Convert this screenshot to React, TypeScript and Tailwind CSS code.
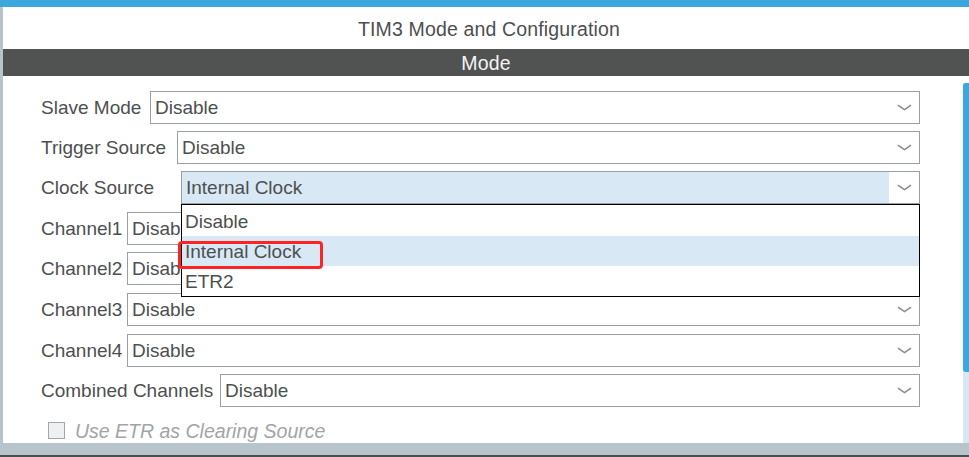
import { ReactNode } from "react";

const rows = [
  { label: "Slave Mode", w: "w-[109px]", h: "h-[40px]", value: "Disable" },
  { label: "Trigger Source", w: "w-[136px]", h: "h-[40px]", value: "Disable" },
  { label: "Clock Source", w: "w-[140px]", h: "h-[41px]", value: "Internal Clock", open: true },
  { label: "Channel1", w: "w-[86px]", h: "h-[40px]", value: "Disable" },
  { label: "Channel2", w: "w-[86px]", h: "h-[41px]", value: "Disable" },
  { label: "Channel3", w: "w-[86px]", h: "h-[41px]", value: "Disable" },
  { label: "Channel4", w: "w-[86px]", h: "h-[40px]", value: "Disable" },
  { label: "Combined Channels", w: "w-[179px]", h: "h-[40px]", value: "Disable" },
];

const options = ["Disable", "Internal Clock", "ETR2"];

function Chevron() {
  return (
    <svg width="15" height="7" viewBox="0 0 15 7" fill="none">
      <path d="M1 1.2 L7.5 5.6 L14 1.2" stroke="#8a8d8f" strokeWidth="1.6" />
    </svg>
  );
}

function Select({ value, open }: { value: string; open?: boolean }) {
  return (
    <div className="relative flex-1 h-[33px] border border-[#9a9fa3] bg-white flex">
      <div
        className={`flex-1 flex items-center pl-[4px] pt-[2px] ${open ? "bg-[#d9e8f5]" : ""}`}
      >
        {value}
      </div>
      <div className="w-[30px] flex items-center justify-center">
        <Chevron />
      </div>
      {open && <Menu />}
    </div>
  );
}

function Menu() {
  return (
    <div className="absolute left-[-1px] right-[-1px] top-[32px] z-10 border border-black bg-white">
      {options.map((o, i) => (
        <div
          key={o}
          className={`flex items-center pl-[3px] pt-[3px] ${i === 0 ? "h-[31px]" : "h-[30px]"} ${
            i === 1 ? "bg-[#d9e8f5]" : ""
          }`}
        >
          {o}
        </div>
      ))}
      {/* red highlight around selected item */}
      <div className="absolute left-[-4px] top-[36px] w-[145px] h-[28px] border-[3px] border-[#ff2424] rounded-[4px]" />
    </div>
  );
}

function Row({ label, w, h, children }: { label: string; w: string; h: string; children: ReactNode }) {
  return (
    <div className={`flex items-start ${h}`}>
      <div className={`${w} h-[33px] pt-[2px] flex items-center shrink-0`}>{label}</div>
      {children}
    </div>
  );
}

export default function App() {
  return (
    <div className="w-[969px] h-[457px] flex flex-col bg-white overflow-hidden font-['Liberation_Sans',Arial,sans-serif] text-[19px] text-[#4d4f50]">
      <div className="h-[7px] bg-[#3aa8dc]" />

      <div className="flex-1 flex min-h-0">
        <div className="w-[3px] bg-[#b8c4cc]" />

        <div className="flex-1 flex flex-col">
          <div className="h-[42px] pt-[3px] pl-[6px] flex items-center justify-center text-[19.5px] tracking-[0.15px]">
            TIM3 Mode and Configuration
          </div>
          <div className="h-[27px] pt-[2px] bg-[#515352] text-[#f4f4f4] flex items-center justify-center text-[19.5px] tracking-[0.15px]">
            Mode
          </div>

          <div className="flex-1 flex min-h-0">
            <div className="flex-1 pt-[15px] pl-[38px] pr-[43px]">
              {rows.map((r) => (
                <Row key={r.label} label={r.label} w={r.w} h={r.h}>
                  <Select value={r.value} open={r.open} />
                </Row>
              ))}

              <div className="mt-[8px] ml-[7px] flex items-center gap-[10px] h-[17px]">
                <div className="w-[17px] h-[17px] border border-[#a3a7aa] bg-[#eef0f2]" />
                <span className="italic text-[#a2a4a6] pt-[3px] text-[19.5px]">Use ETR as Clearing Source</span>
              </div>
            </div>

            {/* scrollbar */}
            <div className="w-[6px] pt-[7px] flex flex-col">
              <div className="flex-1 bg-[#d8e7f3] flex flex-col">
                <div className="h-[289px] bg-[#3aa8dc] rounded-l-[3px]" />
              </div>
            </div>
          </div>
        </div>
      </div>

      <div className="h-[12px] bg-[#b8c4cc]" />
      <div className="h-[2px] bg-[#4a4f52]" />
    </div>
  );
}
